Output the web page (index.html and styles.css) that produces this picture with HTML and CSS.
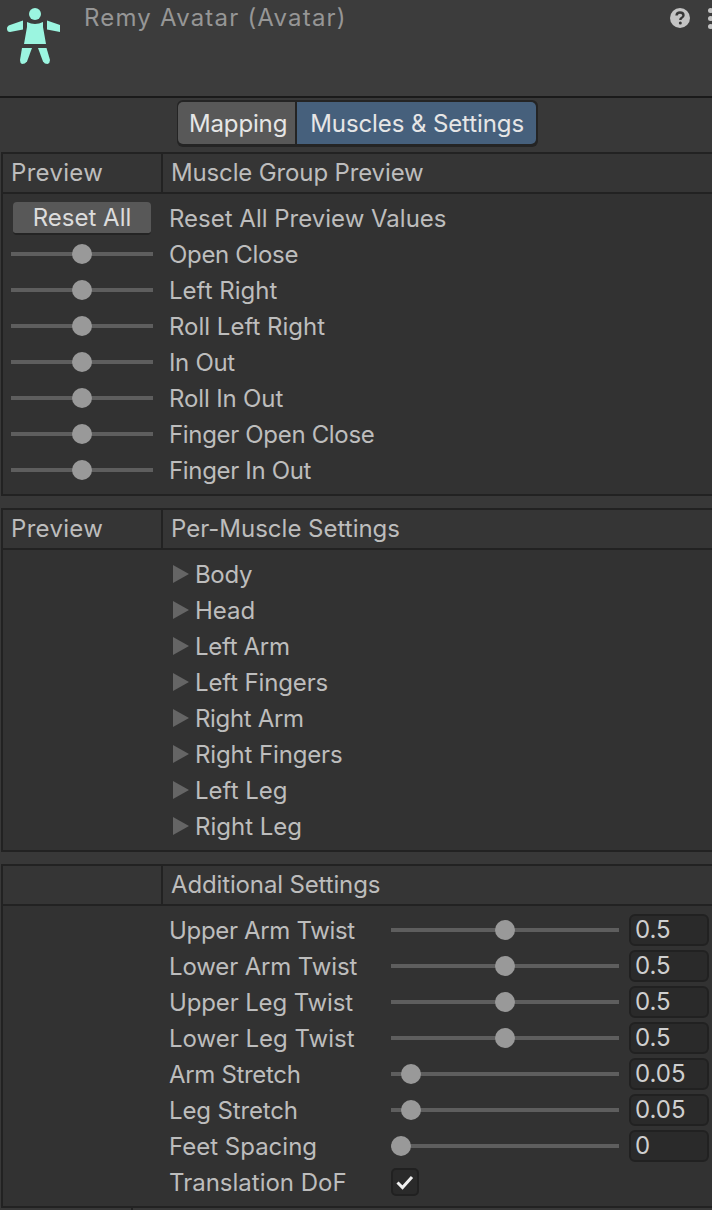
FILE: index.html
```
<!DOCTYPE html>
<html lang="en">
<head>
<meta charset="utf-8">
<title>Remy Avatar</title>
<link rel="stylesheet" href="styles.css">
</head>
<body>
<div class="inspector">
  <header class="title-bar">
    <svg class="avatar-icon" viewBox="0 0 60 66" width="60" height="66">
      <circle cx="35" cy="14" r="6" fill="#9bf5e0"/>
      <path d="M27 22 Q35 26 43 22 L43 27 L46 44 L24 44 L27 27 Z" fill="#9bf5e0"/>
      <path d="M23 20.500 L23 29.500 L10 32 Q7 32 7 28.500 Q7 26 10 25 Z" fill="#9bf5e0"/>
      <path d="M47 20.500 L47 29.500 L60 32 Q63 31 63 28.500 Q63 26.500 60 25 Z" fill="#9bf5e0"/>
      <path d="M22 48 L32 48 L27 61.500 Q25 64 22 64 Q20 63 20 60 Z" fill="#9bf5e0"/>
      <path d="M38 48 L46.500 48 L50 60 Q50 63 47.500 64 Q44.500 64 43 61.500 Z" fill="#9bf5e0"/>
    </svg>
    <span class="object-name">Remy Avatar (Avatar)</span>
    <svg class="help-icon" viewBox="0 0 20 20" width="20" height="20">
      <circle cx="10" cy="10" r="10" fill="#c4c4c4"/>
      <path d="M6.500 7.500 Q6.800 4.500 10 4.500 Q13.500 4.500 13.500 7.300 Q13.500 9 11.500 10 Q10.300 10.700 10.300 12" fill="none" stroke="#383838" stroke-width="2.400"/>
      <circle cx="10.300" cy="15" r="1.500" fill="#383838"/>
    </svg>
    <span class="menu-dots"><i></i><i></i><i></i></span>
  </header>

  <nav class="toolbar">
    <div class="tabs">
      <span class="tab">Mapping</span>
      <span class="tab active">Muscles &amp; Settings</span>
    </div>
  </nav>

  <section class="panel">
    <div class="panel-head">
      <div class="head-left">Preview</div>
      <div class="head-right snug">Muscle Group Preview</div>
    </div>
    <div class="panel-body">
      <div class="row"><div class="left-cell"><button class="reset" type="button">Reset All</button></div><span class="label">Reset All Preview Values</span></div>
      <div class="row"><div class="left-cell"><div class="track"><b class="thumb mid"></b></div></div><span class="label tight">Open Close</span></div>
      <div class="row"><div class="left-cell"><div class="track"><b class="thumb mid"></b></div></div><span class="label">Left Right</span></div>
      <div class="row"><div class="left-cell"><div class="track"><b class="thumb mid"></b></div></div><span class="label">Roll Left Right</span></div>
      <div class="row"><div class="left-cell"><div class="track"><b class="thumb mid"></b></div></div><span class="label tight">In Out</span></div>
      <div class="row"><div class="left-cell"><div class="track"><b class="thumb mid"></b></div></div><span class="label snug">Roll In Out</span></div>
      <div class="row"><div class="left-cell"><div class="track"><b class="thumb mid"></b></div></div><span class="label tight">Finger Open Close</span></div>
      <div class="row"><div class="left-cell"><div class="track"><b class="thumb mid"></b></div></div><span class="label tight">Finger In Out</span></div>
    </div>
  </section>

  <section class="panel">
    <div class="panel-head">
      <div class="head-left">Preview</div>
      <div class="head-right">Per-Muscle Settings</div>
    </div>
    <div class="panel-body">
      <div class="row fold"><i class="arrow"></i><span class="label tight">Body</span></div>
      <div class="row fold"><i class="arrow"></i><span class="label">Head</span></div>
      <div class="row fold"><i class="arrow"></i><span class="label tight">Left Arm</span></div>
      <div class="row fold"><i class="arrow"></i><span class="label snug">Left Fingers</span></div>
      <div class="row fold"><i class="arrow"></i><span class="label tight">Right Arm</span></div>
      <div class="row fold"><i class="arrow"></i><span class="label snug">Right Fingers</span></div>
      <div class="row fold"><i class="arrow"></i><span class="label">Left Leg</span></div>
      <div class="row fold"><i class="arrow"></i><span class="label">Right Leg</span></div>
    </div>
  </section>

  <section class="panel">
    <div class="panel-head">
      <div class="head-left"></div>
      <div class="head-right snug">Additional Settings</div>
    </div>
    <div class="panel-body">
      <div class="row setting"><span class="label tight">Upper Arm Twist</span><div class="track wide"><b class="thumb" style="left:50%"></b></div><span class="field">0.5</span></div>
      <div class="row setting"><span class="label snug">Lower Arm Twist</span><div class="track wide"><b class="thumb" style="left:50%"></b></div><span class="field">0.5</span></div>
      <div class="row setting"><span class="label snug">Upper Leg Twist</span><div class="track wide"><b class="thumb" style="left:50%"></b></div><span class="field">0.5</span></div>
      <div class="row setting"><span class="label">Lower Leg Twist</span><div class="track wide"><b class="thumb" style="left:50%"></b></div><span class="field">0.5</span></div>
      <div class="row setting"><span class="label tight">Arm Stretch</span><div class="track wide"><b class="thumb" style="left:8.800%"></b></div><span class="field">0.05</span></div>
      <div class="row setting"><span class="label snug">Leg Stretch</span><div class="track wide"><b class="thumb" style="left:8.800%"></b></div><span class="field">0.05</span></div>
      <div class="row setting"><span class="label">Feet Spacing</span><div class="track wide"><b class="thumb" style="left:4.400%"></b></div><span class="field">0</span></div>
      <div class="row setting"><span class="label">Translation DoF</span>
        <span class="check"><svg viewBox="0 0 28 28" width="28" height="28"><path d="M6.500 14.500 L11.500 19.500 L21 9" fill="none" stroke="#f0f0f0" stroke-width="3"/></svg></span>
      </div>
    </div>
  </section>
  <div class="footer-stub"><div class="stub-left"></div></div>
</div>
</body>
</html>
```
FILE: styles.css
```
* { box-sizing: border-box; }
html, body { margin: 0; padding: 0; }
body {
  width: 712px;
  height: 1210px;
  overflow: hidden;
  background: #383838;
  font-family: Inter, "Liberation Sans", sans-serif;
  font-size: 24px;
  color: #bdbdbd;
}
.inspector { width: 712px; }

.title-bar {
  height: 98px;
  border-bottom: 2px solid #1a1a1a;
  display: flex;
  align-items: flex-start;
  position: relative;
  background: #3c3c3c;
}
.avatar-icon { flex: none; }
.object-name {
  margin-left: 24px;
  margin-top: 2px;
  line-height: 32px;
  color: #969696;
  letter-spacing: 1.2px;
}
.help-icon { position: absolute; left: 670px; top: 8px; }
.menu-dots {
  position: absolute;
  left: 708px;
  top: 8px;
  display: flex;
  flex-direction: column;
  gap: 3px;
}
.menu-dots i { display: block; width: 5px; height: 5px; border-radius: 50%; background: #c4c4c4; }

.toolbar {
  height: 54px;
  display: flex;
  justify-content: center;
  padding-top: 2px;
  padding-left: 3px;
}
.tabs {
  display: flex;
  height: 47px;
  background: #242424;
  border-radius: 6px;
  padding: 2px 2px 3px 1px;
  gap: 2px;
}
.tab {
  display: flex;
  align-items: center;
  height: 42px;
  padding: 0 8px 0 11px;
  background: #585858;
  color: #e6e6e6;
  border-radius: 5px 0 0 5px;
  letter-spacing: -0.15px;
}
.tab.active {
  background: #46607c;
  border-radius: 0 5px 5px 0;
  padding: 0 12px 0 13px;
  letter-spacing: -0.1px;
}

.panel {
  margin: 0 0 12px 1px;
  border: solid #222;
  border-width: 2px 0 2px 2px;
  background: #323232;
}
.panel-head {
  display: flex;
  height: 40px;
  border-bottom: 2px solid #222;
  background: #353535;
}
.head-left {
  width: 160px;
  flex: none;
  border-right: 2px solid #222;
  padding-left: 8px;
  line-height: 38px;
  letter-spacing: 0.3px;
}
.head-right { padding-left: 8px; line-height: 38px; }

.panel-body { padding: 6px 0; }
.row {
  display: flex;
  align-items: center;
  height: 36px;
}
.left-cell {
  width: 166px;
  flex: none;
  padding-left: 8px;
  padding-right: 16px;
}
.label { line-height: 36px; position: relative; top: 1px; }
.tight { letter-spacing: -0.33px; }
.snug { letter-spacing: -0.14px; }

.reset {
  display: block;
  width: 138px;
  height: 33px;
  margin: 0 0 0 2px;
  padding: 0;
  border: 0;
  border-bottom: 2px solid #242424;
  border-radius: 4px;
  background: #585858;
  color: #dcdcdc;
  font: inherit;
}

.track {
  position: relative;
  height: 4px;
  background: #5e5e5e;
}
.thumb {
  position: absolute;
  top: 2px;
  width: 20px;
  height: 20px;
  margin: -10px 0 0 -10px;
  border-radius: 50%;
  background: #999;
}
.thumb.mid { left: 50%; }

.fold { padding-left: 170px; }
.arrow {
  width: 0;
  height: 0;
  border-style: solid;
  border-width: 9px 0 9px 16px;
  border-color: transparent transparent transparent #656565;
  margin-right: 6px;
}

.setting { padding-left: 166px; }
.setting .label { width: 222px; flex: none; }
.track.wide { width: 228px; flex: none; }
.field {
  margin-left: 10px;
  width: 80px;
  height: 32px;
  flex: none;
  background: #2a2a2a;
  border: 2px solid #212121;
  border-radius: 6px;
  padding-left: 4px;
  line-height: 28px;
  color: #cfcfcf;
}
.check {
  width: 28px;
  height: 28px;
  background: #2a2a2a;
  border: 2px solid #212121;
  border-radius: 5px;
  display: block;
  position: relative;
}
.check svg { position: absolute; left: -2px; top: -2px; }

.footer-stub {
  margin: -12px 0 0 1px;
  height: 4px;
}
.stub-left { width: 132px; height: 100%; border-right: 2px solid #222; }
```
